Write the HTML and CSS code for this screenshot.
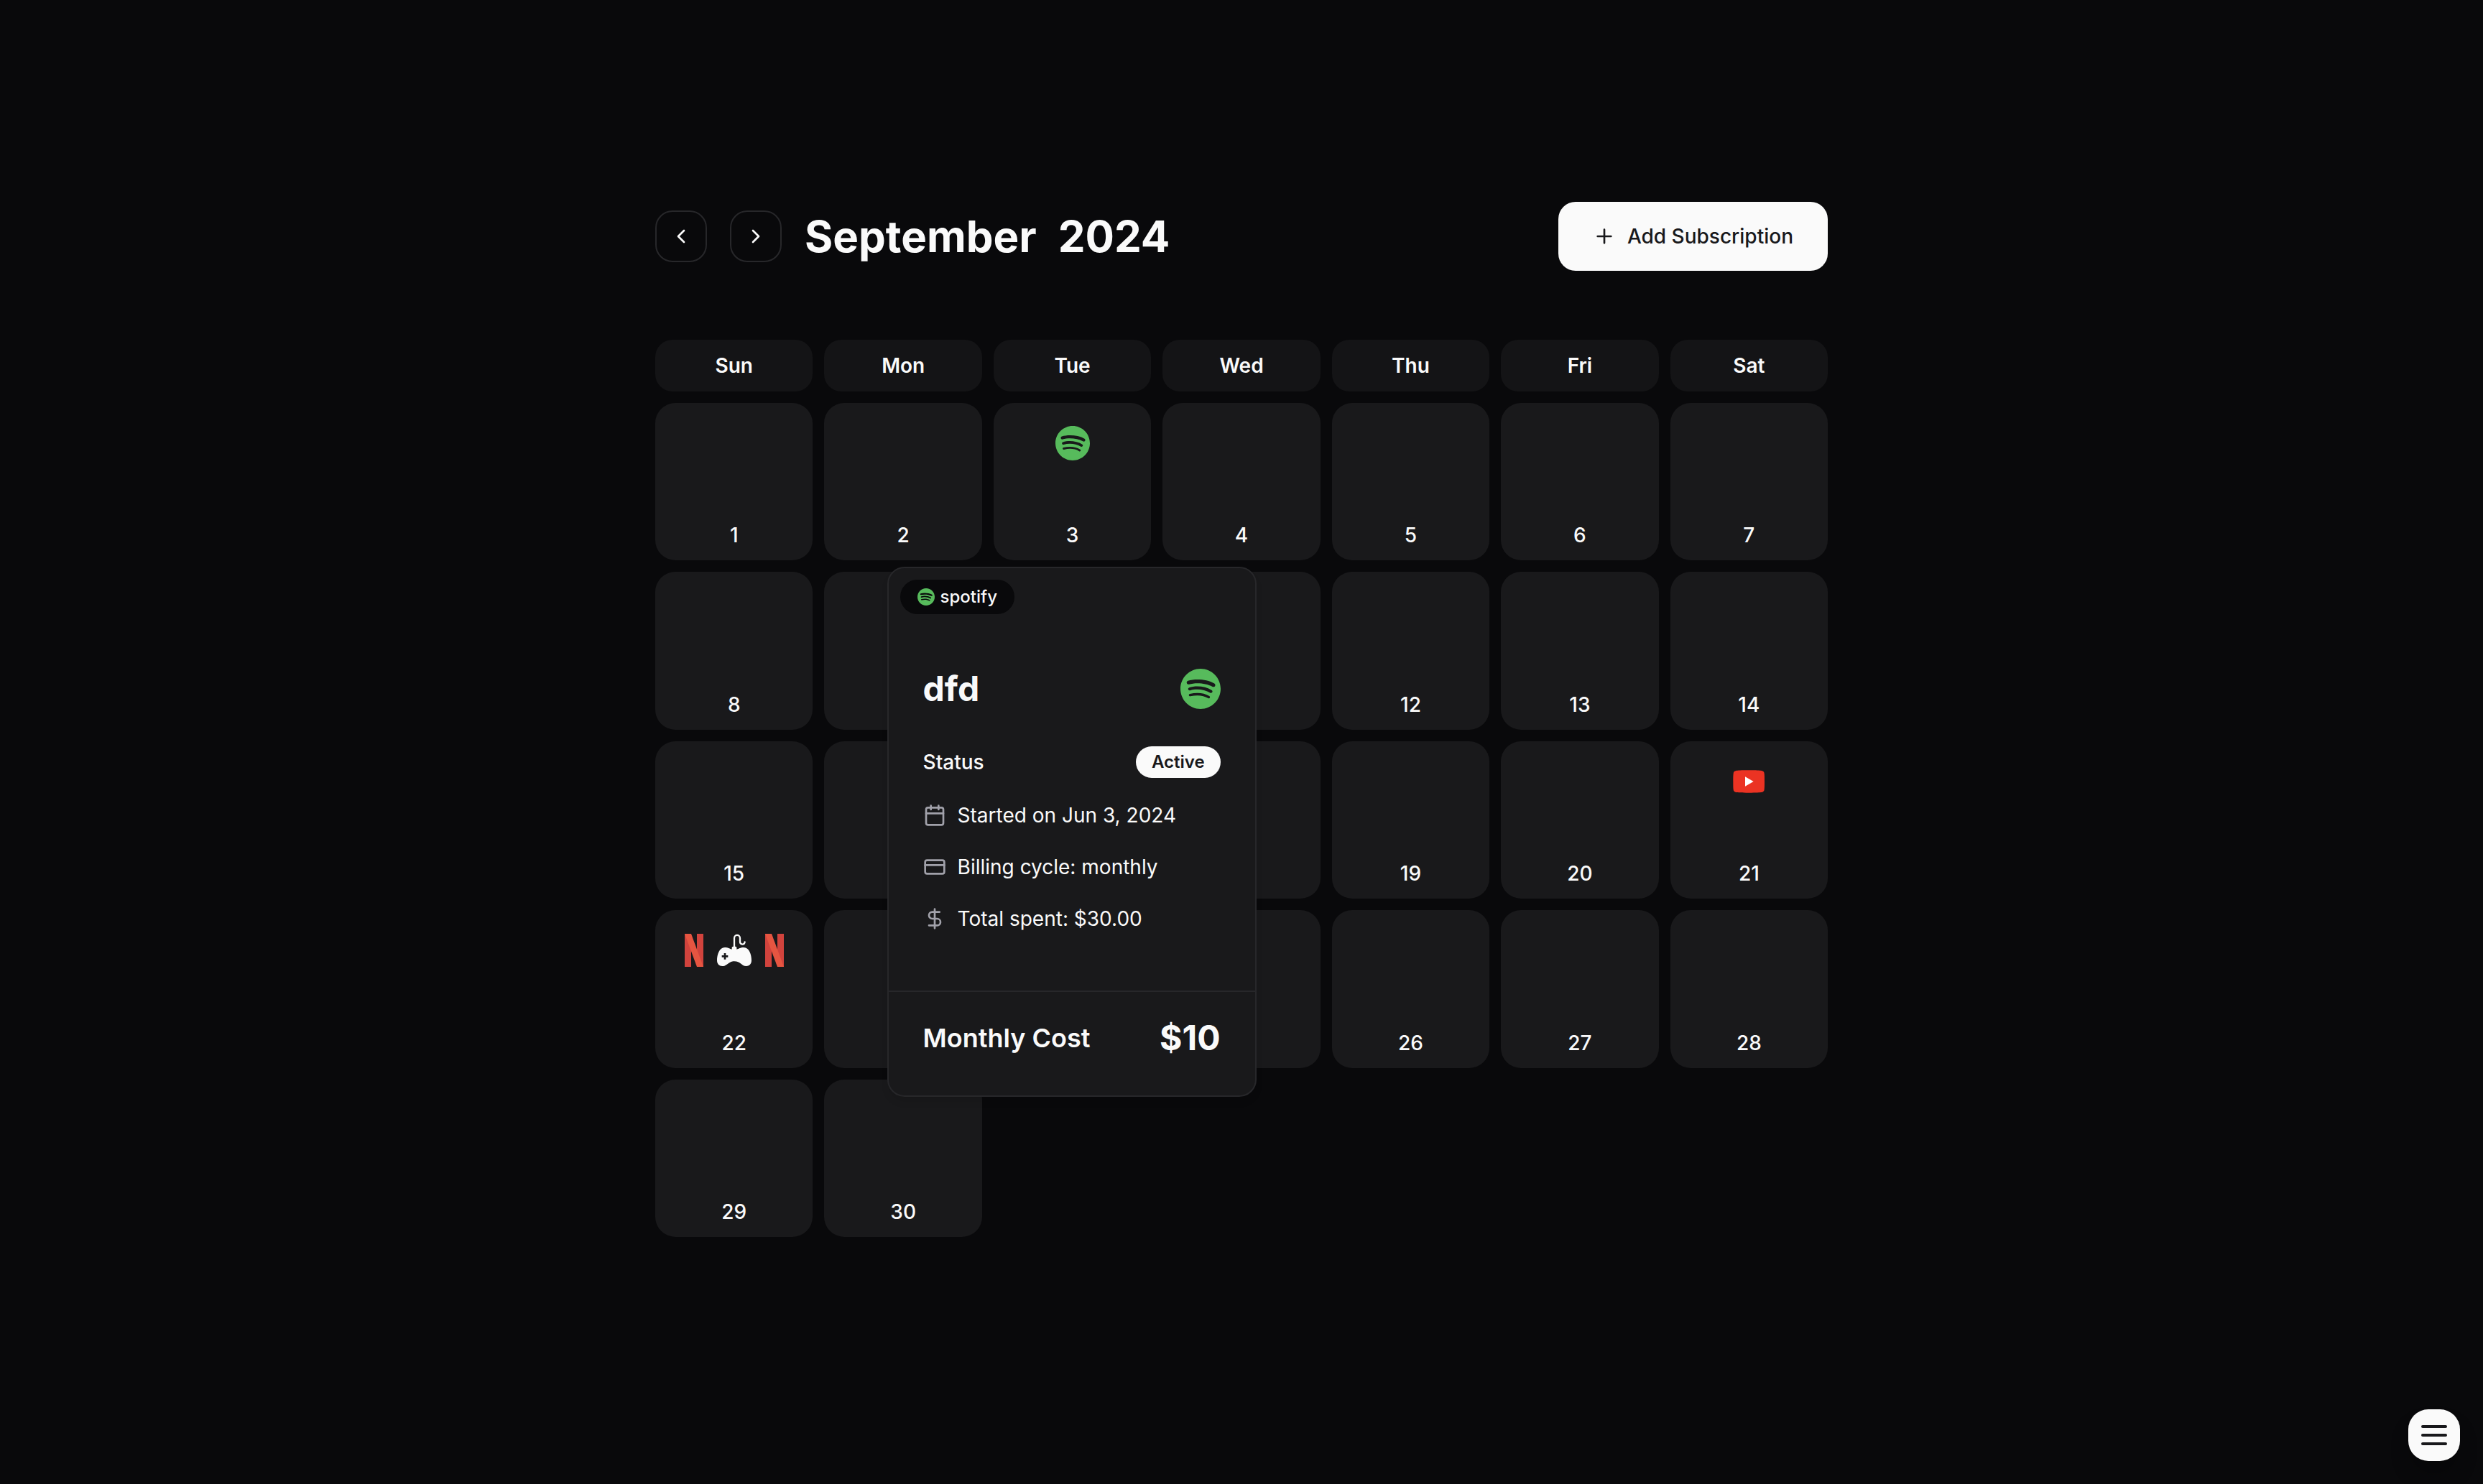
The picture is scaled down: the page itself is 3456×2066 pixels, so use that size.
FILE: index.html
```html
<!DOCTYPE html>
<html lang="en">
<head>
  <meta charset="utf-8">
  <meta name="viewport" content="width=device-width, initial-scale=1">
  <title>Subscriptions</title>
  <link rel="stylesheet" href="styles.css">
</head>
<body>
  <svg class="sprite" aria-hidden="true">
    <symbol id="spotify" viewBox="0 0 24 24">
      <path fill="#57bb5c" d="M12 0C5.4 0 0 5.4 0 12s5.4 12 12 12 12-5.4 12-12S18.66 0 12 0zm5.521 17.34c-.24.359-.66.48-1.021.24-2.82-1.74-6.36-2.101-10.561-1.141-.418.122-.779-.179-.899-.539-.12-.421.18-.78.54-.9 4.56-1.021 8.52-.6 11.64 1.32.42.18.479.659.301 1.02zm1.44-3.3c-.301.42-.841.6-1.262.3-3.239-1.98-8.159-2.58-11.939-1.38-.479.12-1.02-.12-1.14-.6-.12-.48.12-1.021.6-1.141C9.6 9.9 15 10.561 18.72 12.84c.361.181.54.78.241 1.2zm.12-3.36C15.24 8.4 8.82 8.16 5.16 9.301c-.6.179-1.2-.181-1.38-.721-.18-.601.18-1.2.72-1.381 4.26-1.26 11.28-1.02 15.721 1.621.539.3.719 1.02.419 1.56-.299.421-1.02.599-1.559.3z"/>
    </symbol>
    <symbol id="netflix" viewBox="0 0 48 48">
      <path fill="#d1433d" d="M11 1h9v46h-9zM28 1h9v46h-9z"/>
      <path fill="#e65541" d="M11 1h9l17 46h-9z"/>
    </symbol>
    <symbol id="gamepad" viewBox="0 0 144 144">
      <path fill="none" stroke="#fafafa" stroke-width="7" stroke-linecap="round" d="M72 62V22C72 4 96 4 96 22v14c0 13 18 15 20 1"/>
      <path fill="#fafafa" fill-rule="evenodd" d="M62 68V61q0-5 5-5h10q5 0 5 5v7C92 66 96 60 112 60c22 0 32 30 32 54 0 16-10 24-22 24-20 0-24-20-50-20s-30 20-50 20C10 138 0 130 0 114 0 90 10 60 32 60c16 0 20 6 30 8zM29 84v9h-9v8h9v9h8v-9h9v-8h-9v-9z"/>
    </symbol>
    <symbol id="youtube" viewBox="0 0 144 144">
      <path fill="#eb3323" d="M72 25c30 0 48 1 54 2 7 1 11 6 11 12 1 9 1 16 1 33s0 24-1 33c0 6-4 11-11 12-6 1-24 2-54 2s-48-1-53-2c-7-1-11-6-11-12-1-9-1-16-1-33s0-24 1-33c0-6 4-11 11-12 5-1 23-2 53-2z"/>
      <path fill="#fff" d="M57 52l35 20-35 20z"/>
    </symbol>
  </svg>

  <main class="page">
    <header class="toolbar">
      <div class="month-nav">
        <button class="nav-button" type="button" aria-label="Previous month">
          <svg class="icon line-icon" viewBox="0 0 24 24"><path d="m15 18-6-6 6-6"/></svg>
        </button>
        <button class="nav-button" type="button" aria-label="Next month">
          <svg class="icon line-icon" viewBox="0 0 24 24"><path d="m9 18 6-6-6-6"/></svg>
        </button>
        <h1 class="month-title"><span>September</span> <span>2024</span></h1>
      </div>
      <button class="add-button" type="button">
        <svg class="icon line-icon" viewBox="0 0 24 24"><path d="M5 12h14M12 5v14"/></svg>
        Add Subscription
      </button>
    </header>

    <section class="calendar" aria-label="September 2024">
      <ul class="weekdays">
        <li>Sun</li><li>Mon</li><li>Tue</li><li>Wed</li><li>Thu</li><li>Fri</li><li>Sat</li>
      </ul>
      <ol class="days">
        <li class="day">1</li>
        <li class="day">2</li>
        <li class="day">
          <div class="logos"><svg class="logo"><use href="#spotify"/></svg></div>
          3
          <article class="popover">
            <div class="tag"><svg class="tag-logo"><use href="#spotify"/></svg>spotify</div>
            <div class="details">
              <div class="details-head">
                <h2>dfd</h2>
                <svg class="details-logo"><use href="#spotify"/></svg>
              </div>
              <div class="status">
                <span>Status</span>
                <span class="pill">Active</span>
              </div>
              <ul class="facts">
                <li>
                  <svg class="icon line-icon muted" viewBox="0 0 24 24"><path d="M8 2v4M16 2v4M3 10h18"/><rect x="3" y="4" width="18" height="18" rx="2"/></svg>
                  Started on Jun 3, 2024
                </li>
                <li>
                  <svg class="icon line-icon muted" viewBox="0 0 24 24"><rect x="2" y="5" width="20" height="14" rx="2"/><path d="M2 10h20"/></svg>
                  Billing cycle: monthly
                </li>
                <li>
                  <svg class="icon line-icon muted" viewBox="0 0 24 24"><path d="M12 2v20M17 5H9.500a3.500 3.500 0 0 0 0 7h5a3.500 3.500 0 0 1 0 7H6"/></svg>
                  Total spent: $30.00
                </li>
              </ul>
            </div>
            <footer class="cost">
              <span>Monthly Cost</span>
              <strong>$10</strong>
            </footer>
          </article>
        </li>
        <li class="day">4</li>
        <li class="day">5</li>
        <li class="day">6</li>
        <li class="day">7</li>
        <li class="day">8</li>
        <li class="day">9</li>
        <li class="day">10</li>
        <li class="day">11</li>
        <li class="day">12</li>
        <li class="day">13</li>
        <li class="day">14</li>
        <li class="day">15</li>
        <li class="day">16</li>
        <li class="day">17</li>
        <li class="day">18</li>
        <li class="day">19</li>
        <li class="day">20</li>
        <li class="day">
          <div class="logos"><svg class="logo"><use href="#youtube"/></svg></div>
          21
        </li>
        <li class="day">
          <div class="logos">
            <svg class="logo"><use href="#netflix"/></svg>
            <svg class="logo"><use href="#gamepad"/></svg>
            <svg class="logo"><use href="#netflix"/></svg>
          </div>
          22
        </li>
        <li class="day">23</li>
        <li class="day">24</li>
        <li class="day">25</li>
        <li class="day">26</li>
        <li class="day">27</li>
        <li class="day">28</li>
        <li class="day">29</li>
        <li class="day">30</li>
      </ol>
    </section>
  </main>

  <button class="menu-button" type="button" aria-label="Open menu">
    <span></span><span></span><span></span>
  </button>
</body>
</html>
```
FILE: styles.css
```css
:root {
  --background: #09090b;
  --surface: #19191b;
  --surface-dim: #141416;
  --border: #27272a;
  --text: #fafafa;
  --text-dark: #18181b;
  --muted: #a1a1aa;
}

* {
  box-sizing: border-box;
}

body {
  margin: 0;
  min-height: 100vh;
  background: var(--background);
  color: var(--text);
  font-family: Inter, "Liberation Sans", sans-serif;
  font-size: 28px;
  line-height: 40px;
}

button {
  font: inherit;
  color: inherit;
  cursor: pointer;
}

h1,
h2,
ul,
ol {
  margin: 0;
  padding: 0;
  list-style: none;
}

.sprite {
  position: absolute;
  width: 0;
  height: 0;
}

.icon {
  flex: none;
  width: 32px;
  height: 32px;
}

.line-icon {
  fill: none;
  stroke: currentColor;
  stroke-width: 2;
  stroke-linecap: round;
  stroke-linejoin: round;
}

.muted {
  color: var(--muted);
}

.page {
  display: flex;
  flex-direction: column;
  gap: 96px;
  max-width: 1632px;
  margin: 0 auto;
  padding: 281px 0;
}

/* Toolbar */

.toolbar,
.month-nav {
  display: flex;
  align-items: center;
}

.toolbar {
  justify-content: space-between;
}

.month-nav {
  gap: 32px;
}

.nav-button {
  display: flex;
  align-items: center;
  justify-content: center;
  width: 72px;
  height: 72px;
  padding: 0;
  border: 2px solid var(--border);
  border-radius: 24px;
  background: transparent;
}

.month-title {
  display: flex;
  gap: 30px;
  font-size: 60px;
  font-weight: 700;
  line-height: 72px;
}

.add-button {
  display: flex;
  align-items: center;
  gap: 16px;
  height: 96px;
  padding: 0 48px;
  border: 0;
  border-radius: 24px;
  background: var(--text);
  color: var(--text-dark);
  font-weight: 500;
}

/* Calendar */

.calendar,
.weekdays,
.days {
  display: grid;
  gap: 16px;
}

.weekdays,
.days {
  grid-template-columns: repeat(7, 1fr);
}

.weekdays li {
  padding: 16px;
  border-radius: 24px;
  background: var(--surface-dim);
  font-weight: 600;
  text-align: center;
}

.day {
  position: relative;
  display: flex;
  flex-direction: column;
  align-items: center;
  justify-content: flex-end;
  aspect-ratio: 1;
  padding: 32px 16px 15px;
  border-radius: 28px;
  background: var(--surface);
  font-weight: 500;
}

.logos {
  display: flex;
  gap: 8px;
  margin-bottom: auto;
}

.logo {
  width: 48px;
  height: 48px;
}

/* Subscription popover */

.popover {
  position: absolute;
  z-index: 1;
  top: calc(100% + 9px);
  left: calc(50% - 258px);
  width: 514px;
  border: 2px solid var(--border);
  border-radius: 24px;
  background: var(--surface);
  box-shadow: 0 8px 12px -2px rgb(0 0 0 / 10%);
}

.tag {
  position: absolute;
  top: 16px;
  left: 16px;
  display: flex;
  align-items: center;
  gap: 8px;
  height: 48px;
  padding: 0 24px;
  border-radius: 24px;
  background: var(--background);
  font-size: 24px;
}

.tag-logo {
  width: 24px;
  height: 24px;
}

.details {
  display: flex;
  flex-direction: column;
  padding: 136px 48px 80px;
}

.details-head,
.status,
.cost {
  display: flex;
  align-items: center;
  justify-content: space-between;
}

.details-head {
  margin-bottom: 48px;
}

.details-head h2 {
  font-size: 48px;
  font-weight: 700;
  line-height: 64px;
}

.details-logo {
  width: 56px;
  height: 56px;
}

.status {
  margin-bottom: 32px;
}

.pill {
  padding: 6px 22px;
  border-radius: 22px;
  background: var(--text);
  color: var(--text-dark);
  font-size: 24px;
  font-weight: 600;
  line-height: 32px;
}

.facts {
  display: grid;
  gap: 32px;
  font-weight: 400;
}

.facts li {
  display: flex;
  align-items: center;
  gap: 16px;
}

.cost {
  padding: 32px 48px 48px;
  border-top: 2px solid var(--border);
  font-size: 36px;
  font-weight: 600;
}

.cost strong {
  font-size: 48px;
  font-weight: 700;
  line-height: 64px;
}

/* Floating menu button */

.menu-button {
  position: fixed;
  right: 32px;
  bottom: 32px;
  display: flex;
  flex-direction: column;
  align-items: center;
  justify-content: center;
  gap: 8px;
  width: 72px;
  height: 72px;
  padding: 0;
  border: 0;
  border-radius: 28px;
  background: var(--text);
  box-shadow: 0 20px 30px -6px rgb(0 0 0 / 30%);
}

.menu-button span {
  width: 36px;
  height: 4px;
  border-radius: 2px;
  background: var(--text-dark);
}
```
